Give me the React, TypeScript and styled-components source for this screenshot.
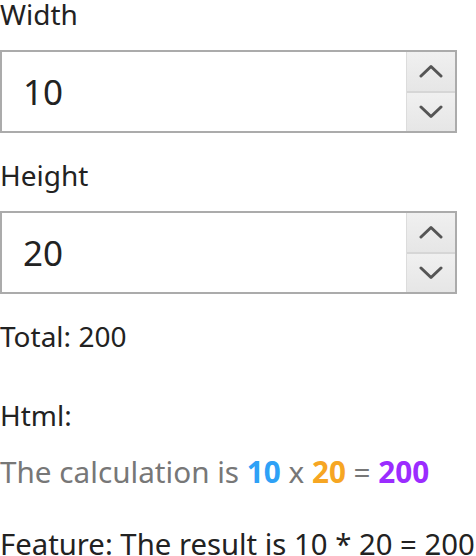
import React, { useState } from "react";
import styled, { createGlobalStyle } from "styled-components";

const Global = createGlobalStyle`
  html, body { margin: 0; padding: 0; background: #fff; }
  body {
    font-family: "Noto Sans", "Open Sans", sans-serif;
    color: #222;
  }
  input[type=number]::-webkit-inner-spin-button,
  input[type=number]::-webkit-outer-spin-button { -webkit-appearance: none; margin: 0; }
`;

const Page = styled.div`
  display: flex;
  flex-direction: column;
  width: 476px;
  overflow: hidden;
`;

const Label = styled.div<{ $top?: number }>`
  font-size: 28px;
  line-height: 28px;
  margin-top: ${(p) => p.$top ?? 0}px;
  color: #222;
`;

const Field = styled.div`
  display: flex;
  box-sizing: border-box;
  width: 457px;
  height: 83px;
  margin-top: 22px;
  border: 2px solid #ababab;
  background: #fff;
`;

const NumberInput = styled.input`
  flex: 1;
  min-width: 0;
  border: none;
  outline: none;
  padding: 0 0 0 21px;
  font-family: "Noto Sans", sans-serif;
  font-size: 35px;
  color: #222;
  background: transparent;
`;

const Spinner = styled.div`
  display: flex;
  flex-direction: column;
  width: 48px;
  border-left: 1px solid #dcdcdc;
`;

const SpinButton = styled.button<{ $first?: boolean }>`
  flex: 1;
  display: flex;
  align-items: center;
  justify-content: center;
  padding: 0;
  border: none;
  border-top: ${(p) => (p.$first ? "none" : "2px solid #d6d6d6")};
  background: linear-gradient(#f0f0f0, #e6e6e6);
  cursor: pointer;
`;

const Chevron = ({ up }: { up?: boolean }) => (
  <svg width="24" height="14" viewBox="0 0 24 14" fill="none">
    <path
      d={up ? "M2 12 L12 2.5 L22 12" : "M2 2 L12 11.5 L22 2"}
      stroke="#555"
      strokeWidth="3"
      strokeLinecap="round"
      strokeLinejoin="round"
    />
  </svg>
);

const Text = styled.div<{ $top: number; $size?: number }>`
  font-size: ${(p) => p.$size ?? 28}px;
  line-height: 28px;
  margin-top: ${(p) => p.$top}px;
  color: #222;
  white-space: nowrap;
`;

const Calc = styled.div<{ $top: number }>`
  font-size: 29.7px;
  line-height: 28px;
  margin-top: ${(p) => p.$top}px;
  color: #777;
  white-space: nowrap;
`;

const Num = styled.b<{ $color: string }>`
  font-weight: 700;
  color: ${(p) => p.$color};
`;

function NumberField({ value, onChange }: { value: number; onChange: (v: number) => void }) {
  return (
    <Field>
      <NumberInput
        type="number"
        value={value}
        onChange={(e) => onChange(Number(e.target.value))}
      />
      <Spinner>
        <SpinButton $first onClick={() => onChange(value + 1)}>
          <Chevron up />
        </SpinButton>
        <SpinButton onClick={() => onChange(value - 1)}>
          <Chevron />
        </SpinButton>
      </Spinner>
    </Field>
  );
}

export default function App() {
  const [w, setW] = useState(10);
  const [h, setH] = useState(20);
  const total = w * h;
  return (
    <Page>
      <Global />
      <Label>Width</Label>
      <NumberField value={w} onChange={setW} />
      <Label $top={28}>Height</Label>
      <NumberField value={h} onChange={setH} />
      <Text $top={28}>Total: {total}</Text>
      <Text $top={51}>Html:</Text>
      <Calc $top={29}>
        The calculation is <Num $color="#2ea1f6">{w}</Num> x{" "}
        <Num $color="#f6a623">{h}</Num> = <Num $color="#9b2cff">{total}</Num>
      </Calc>
      <Text $top={44} $size={29.3}>
        Feature: The result is {w} * {h} = {total}
      </Text>
    </Page>
  );
}
